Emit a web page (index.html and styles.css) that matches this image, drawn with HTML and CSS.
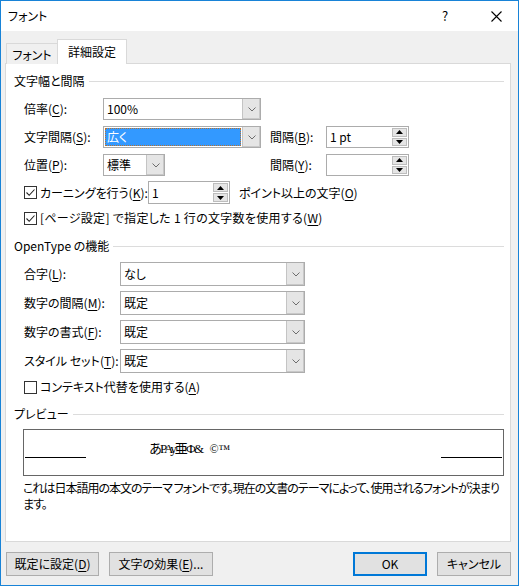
FILE: index.html
```html
<!DOCTYPE html>
<html lang="ja">
<head>
<meta charset="utf-8">
<title>フォント</title>
<link rel="stylesheet" href="styles.css">
</head>
<body>
<div class="window">
  <div class="titlebar">
    <span class="title">フォント</span>
    <span class="help">?</span>
    <span class="close"><svg width="11" height="11" viewBox="0 0 11 11"><path d="M0.5 0.5 L10.5 10.5 M10.5 0.5 L0.5 10.5" stroke="#000" stroke-width="1.1" fill="none"/></svg></span>
  </div>
  <div class="content">
    <div class="tabs">
      <div class="tab">フォント</div>
      <div class="tab active">詳細設定</div>
    </div>
    <div class="panel">
      <div class="group g1"><span>文字幅と間隔</span></div>

      <div class="row r-first">
        <span class="lbl w79">倍率(<u>C</u>):</span>
        <div class="combo w158"><span class="val">100%</span><span class="dd"><svg width="8" height="5" viewBox="0 0 8 5"><path d="M0.5 0.5 L4 4 L7.5 0.5" stroke="#6d6d6d" fill="none"/></svg></span></div>
      </div>

      <div class="row r-std">
        <span class="lbl w79">文字間隔(<u>S</u>):</span>
        <div class="combo w158"><span class="val sel"><span class="hl">広く</span></span><span class="dd"><svg width="8" height="5" viewBox="0 0 8 5"><path d="M0.5 0.5 L4 4 L7.5 0.5" stroke="#6d6d6d" fill="none"/></svg></span></div>
        <span class="lbl w56 ml9">間隔(<u>B</u>):</span>
        <div class="spin w83"><span class="val">1 pt</span><span class="arrows"><span class="ar"><svg width="7" height="4" viewBox="0 0 7 4"><path d="M3.5 0 L7 4 L0 4Z" fill="#000"/></svg></span><span class="ar"><svg width="7" height="4" viewBox="0 0 7 4"><path d="M0 0 L7 0 L3.5 4Z" fill="#000"/></svg></span></span></div>
      </div>

      <div class="row r-std">
        <span class="lbl w79">位置(<u>P</u>):</span>
        <div class="combo w62"><span class="val">標準</span><span class="dd"><svg width="8" height="5" viewBox="0 0 8 5"><path d="M0.5 0.5 L4 4 L7.5 0.5" stroke="#6d6d6d" fill="none"/></svg></span></div>
        <span class="lbl w56 ml105">間隔(<u>Y</u>):</span>
        <div class="spin w83"><span class="val"></span><span class="arrows"><span class="ar"><svg width="7" height="4" viewBox="0 0 7 4"><path d="M3.5 0 L7 4 L0 4Z" fill="#000"/></svg></span><span class="ar"><svg width="7" height="4" viewBox="0 0 7 4"><path d="M0 0 L7 0 L3.5 4Z" fill="#000"/></svg></span></span></div>
      </div>

      <div class="row r-kern">
        <span class="check on"><svg width="11" height="11" viewBox="0 0 11 11"><path d="M1.5 5.5 L4.2 8.3 L9.5 2.5" stroke="#222" stroke-width="1.1" fill="none"/></svg></span>
        <span class="lbl w110">カーニングを行う(<u>K</u>):</span>
        <div class="spin w83"><span class="val">1</span><span class="arrows"><span class="ar"><svg width="7" height="4" viewBox="0 0 7 4"><path d="M3.5 0 L7 4 L0 4Z" fill="#000"/></svg></span><span class="ar"><svg width="7" height="4" viewBox="0 0 7 4"><path d="M0 0 L7 0 L3.5 4Z" fill="#000"/></svg></span></span></div>
        <span class="lbl ml11">ポイント以上の文字(<u>O</u>)</span>
      </div>

      <div class="row r-chk">
        <span class="check on"><svg width="11" height="11" viewBox="0 0 11 11"><path d="M1.5 5.5 L4.2 8.3 L9.5 2.5" stroke="#222" stroke-width="1.1" fill="none"/></svg></span>
        <span class="lbl wide">[ページ設定] で指定した 1 行の文字数を使用する(<u>W</u>)</span>
      </div>

      <div class="group g2"><span>OpenType の機能</span></div>

      <div class="row r-ot1">
        <span class="lbl w96">合字(<u>L</u>):</span>
        <div class="combo tall w185"><span class="val">なし</span><span class="dd"><svg width="8" height="5" viewBox="0 0 8 5"><path d="M0.5 0.5 L4 4 L7.5 0.5" stroke="#6d6d6d" fill="none"/></svg></span></div>
      </div>
      <div class="row r-ot">
        <span class="lbl w96">数字の間隔(<u>M</u>):</span>
        <div class="combo tall w185"><span class="val">既定</span><span class="dd"><svg width="8" height="5" viewBox="0 0 8 5"><path d="M0.5 0.5 L4 4 L7.5 0.5" stroke="#6d6d6d" fill="none"/></svg></span></div>
      </div>
      <div class="row r-ot">
        <span class="lbl w96">数字の書式(<u>F</u>):</span>
        <div class="combo tall w185"><span class="val">既定</span><span class="dd"><svg width="8" height="5" viewBox="0 0 8 5"><path d="M0.5 0.5 L4 4 L7.5 0.5" stroke="#6d6d6d" fill="none"/></svg></span></div>
      </div>
      <div class="row r-ot">
        <span class="lbl w96">スタイル セット(<u>T</u>):</span>
        <div class="combo tall w185"><span class="val">既定</span><span class="dd"><svg width="8" height="5" viewBox="0 0 8 5"><path d="M0.5 0.5 L4 4 L7.5 0.5" stroke="#6d6d6d" fill="none"/></svg></span></div>
      </div>

      <div class="row r-chk2">
        <span class="check"></span>
        <span class="lbl">コンテキスト代替を使用する(<u>A</u>)</span>
      </div>

      <div class="group g3"><span>プレビュー</span></div>

      <div class="preview">
        <span class="pline"></span>
        <span class="ptext"><span class="glitch">あPAy亜Ф&amp;</span> <span class="sym">©™</span></span>
        <span class="pline"></span>
      </div>
      <p class="desc">これは日本語用の本文のテーマ フォントです。現在の文書のテーマによって、使用されるフォントが決まります。</p>
    </div>

    <div class="footer">
      <button class="btn b-def">既定に設定(<u>D</u>)</button>
      <button class="btn b-eff">文字の効果(<u>E</u>)...</button>
      <span class="spacer"></span>
      <button class="btn b-ok">OK</button>
      <button class="btn b-cancel">キャンセル</button>
    </div>
  </div>
</div>
</body>
</html>
```

FILE: styles.css
```css
* { box-sizing: border-box; }
html, body { margin: 0; padding: 0; }
body {
  font-family: "Noto Sans CJK JP", "Noto Sans", sans-serif;
  font-feature-settings: "palt";
  font-size: 12px;
  color: #000;
  background: #f0f0f0;
}
u { text-underline-offset: 2px; }

.window {
  width: 519px;
  height: 586px;
  border: 1px solid #1883d7;
  background: #f0f0f0;
  display: flex;
  flex-direction: column;
}

.titlebar {
  height: 30px;
  background: #fff;
  display: flex;
  align-items: center;
  padding-left: 7px;
}
.title { flex: 1; line-height: 16px; }
.help { width: 12px; font-size: 13px; margin-right: 37px; line-height: 16px; }
.close { width: 11px; height: 11px; margin-right: 16px; display: flex; }

.content {
  flex: 1;
  display: flex;
  flex-direction: column;
  padding: 8px 7px 0 4px;
}

.tabs {
  display: flex;
  align-items: flex-end;
  padding-left: 1px;
  position: relative;
  z-index: 2;
  margin-bottom: -1px;
}
.tab {
  height: 21px;
  width: 51px;
  border: 1px solid #d9d9d9;
  border-bottom: none;
  border-right: none;
  background: #f0f0f0;
  display: flex;
  align-items: center;
  justify-content: center;
  line-height: 14px;
  padding-top: 1px;
}
.tab.active {
  height: 25px;
  width: 70px;
  background: #fff;
  border-right: 1px solid #d9d9d9;
  padding-top: 0;
  padding-bottom: 1px;
}

.panel {
  height: 479px;
  width: 506px;
  background: #fff;
  border: 1px solid #d9d9d9;
  padding: 0 6px 0 8px;
  display: flex;
  flex-direction: column;
}

.group {
  height: 16px;
  display: flex;
  align-items: center;
  line-height: 16px;
}
.group::after {
  content: "";
  flex: 1;
  height: 1px;
  background: #dcdcdc;
  margin-left: 4px;
  margin-top: 1px;
}
.g1 { margin-top: 9px; }
.g2 { margin-top: 12px; }
.g3 { margin-top: 11px; }

.row {
  display: flex;
  align-items: center;
  padding-left: 10px;
  line-height: 16px;
}
.r-first { margin-top: 9px; height: 22px; }
.r-std { margin-top: 6px; height: 22px; }
.r-kern { margin-top: 5px; height: 23px; }
.r-chk { margin-top: 6px; height: 16px; }
.r-ot1 { margin-top: 8px; height: 24px; }
.r-ot { margin-top: 5px; height: 24px; }
.r-chk2 { margin-top: 6px; height: 16px; }

.lbl { white-space: nowrap; }
.wide { letter-spacing: 0.3px; }
.w79 { width: 79px; }
.w56 { width: 56px; }
.w96 { width: 96px; }
.w110 { width: 110px; }
.ml9 { margin-left: 9px; }
.ml105 { margin-left: 105px; }
.ml11 { margin-left: 9px; }

.combo {
  height: 22px;
  display: flex;
  border: 1px solid #acacac;
  background: #fff;
}
.combo.tall { height: 24px; }
.w158 { width: 158px; }
.w62 { width: 62px; }
.w185 { width: 185px; }
.w83 { width: 83px; }
.combo .val {
  flex: 1;
  display: flex;
  align-items: center;
  padding-left: 3px;
}
.combo .val.sel { padding: 1px; }
.hl {
  flex: 1;
  align-self: stretch;
  background: #3399ff;
  color: #fff;
  outline: 1px dotted #b9722e;
  outline-offset: -1px;
  display: flex;
  align-items: center;
  padding-left: 2px;
}
.dd {
  width: 18px;
  background: #e5e5e5;
  border-left: 1px solid #c4c4c4;
  box-shadow: inset -1px -1px 0 #c8c8c8;
  display: flex;
  align-items: center;
  justify-content: center;
}

.spin {
  height: 22px;
  display: flex;
  border: 1px solid #acacac;
  background: #fff;
}
.r-kern .spin { height: 23px; width: 82px; margin-left: -2px; }
.spin .val {
  flex: 1;
  display: flex;
  align-items: center;
  padding-left: 3px;
}
.arrows {
  width: 16px;
  display: flex;
  flex-direction: column;
  padding: 1px 1px 1px 0;
  gap: 1px;
}
.ar {
  flex: 1;
  background: #e5e5e5;
  border: 1px solid #bdbdbd;
  display: flex;
  align-items: center;
  justify-content: center;
}

.check {
  width: 13px;
  height: 13px;
  border: 1px solid #333;
  background: #fff;
  display: flex;
  align-items: center;
  justify-content: center;
  margin-right: 3px;
  flex: none;
}

.preview {
  margin: 7px 0 0 9px;
  width: 481px;
  height: 47px;
  border: 1px solid #666;
  display: flex;
  align-items: flex-end;
  padding: 0 1px 17px 1px;
}
.pline {
  width: 61px;
  height: 1px;
  background: #000;
}
.ptext {
  flex: 1;
  padding-left: 63px;
  font-family: "Liberation Serif", "Noto Sans CJK JP", serif;
  font-feature-settings: normal;
  font-size: 13px;
  line-height: 13px;
  margin-bottom: 2px;
}
.glitch { letter-spacing: -2px; }
.sym { font-size: 12px; margin-left: 4px; }

.desc {
  margin: 4px 0 0 9px;
  width: 481px;
  line-height: 16px;
  letter-spacing: -1px;
}

.footer {
  margin-top: 10px;
  display: flex;
  align-items: center;
  padding-left: 1px;
}
.btn {
  height: 24px;
  font-family: inherit;
  font-feature-settings: "palt";
  font-size: 12px;
  background: #e1e1e1;
  border: 1px solid #adadad;
  color: #000;
  padding: 0;
  line-height: 16px;
}
.b-def { width: 93px; }
.b-eff { width: 104px; margin-left: 10px; }
.spacer { flex: 1; }
.b-ok { width: 74px; border: 2px solid #0078d7; }
.b-cancel { width: 74px; margin-left: 10px; }
```
